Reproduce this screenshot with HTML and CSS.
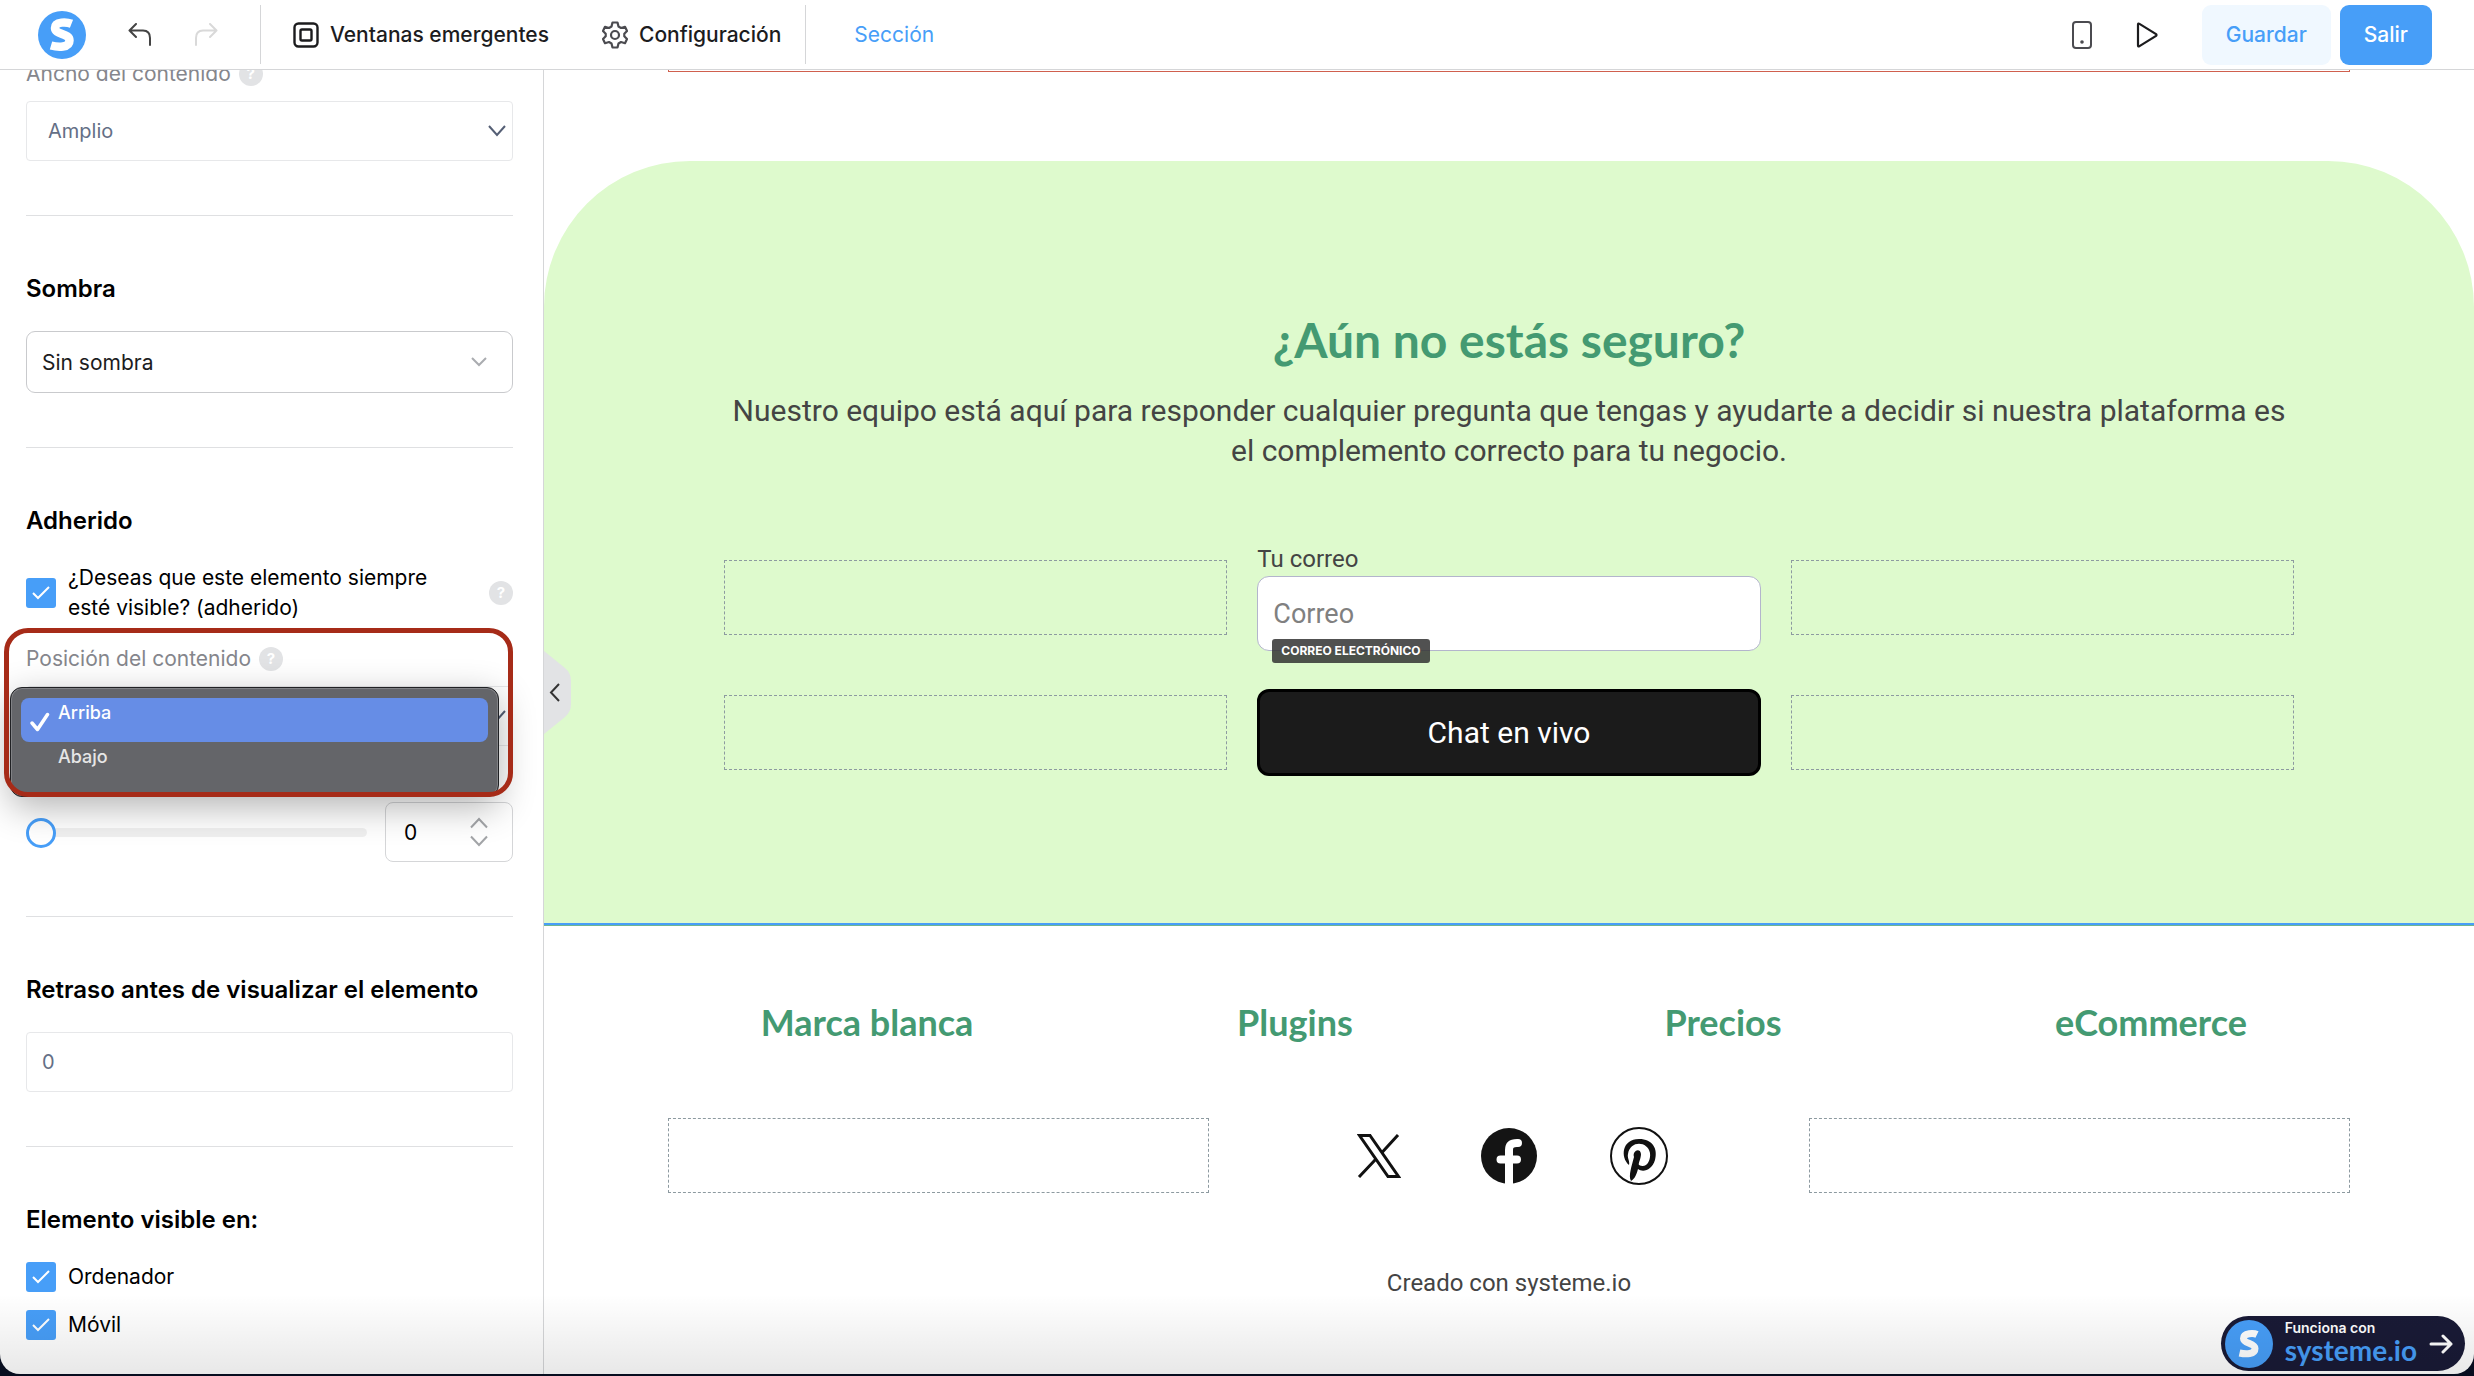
FILE: index.html
```
<!DOCTYPE html>
<html lang="es">

<head>
    <meta charset="UTF-8">
    <meta name="viewport" content="width=device-width, initial-scale=1.0">
    <title>Editor - Sección</title>
    <link rel="stylesheet" href="styles.css">
</head>

<body>
    <div class="app">
        <header class="topbar">
            <a class="logo" href="#" aria-label="Inicio">
                <svg width="48" height="48" viewBox="0 0 48 48">
                    <circle cx="24" cy="24" r="24" fill="#479ef8" />
                    <path d="M33.500 12.800C29 11 17 10 17 17C17 24 31.500 22 31.500 29.500C31.500 37 20 36.500 13 34.500" fill="none" stroke="#fff" stroke-width="8.500" />
                </svg>
            </a>
            <div class="history">
                <button class="icon-btn" type="button" aria-label="Deshacer">
                    <svg width="24" height="24" viewBox="0 0 24 24" fill="none" stroke="#444" stroke-width="2" stroke-linecap="round" stroke-linejoin="round"><path d="M8 1L1.500 7.500L8 14M1.500 7.500H15Q22 7.500 22 15V22" /></svg>
                </button>
                <button class="icon-btn" type="button" aria-label="Rehacer">
                    <svg width="24" height="24" viewBox="0 0 24 24" fill="none" stroke="#d9d9d9" stroke-width="2" stroke-linecap="round" stroke-linejoin="round"><path d="M16 1L22.500 7.500L16 14M22.500 7.500H9Q2 7.500 2 15V22" /></svg>
                </button>
            </div>
            <nav class="menu">
                <a href="#">
                    <svg width="26" height="26" viewBox="0 0 26 26" fill="none" stroke="#1c1c1e" stroke-width="2.400"><rect x="1.500" y="1.500" width="23" height="23" rx="4" /><rect x="7.500" y="7.500" width="11" height="11" rx="1.500" /></svg>
                    Ventanas emergentes
                </a>
                <a href="#">
                    <svg width="26" height="28" viewBox="0 0 26 28" fill="none" stroke="#4b4b50" stroke-width="2.200" stroke-linejoin="round"><path d="M10.500 1.500H15.500L16.500 5.500L19 7L23 5.800L25 10L22.300 12.800V15.200L25 18L23 22.200L19 21L16.500 22.500L15.500 26.500H10.500L9.500 22.500L7 21L3 22.200L1 18L3.700 15.200V12.800L1 10L3 5.800L7 7L9.500 5.500Z" /><circle cx="13" cy="14" r="4" /></svg>
                    Configuración
                </a>
            </nav>
            <a class="crumb" href="#">Sección</a>
            <div class="actions">
                <button class="icon-btn" type="button" aria-label="Vista móvil">
                    <svg width="20" height="28" viewBox="0 0 20 28"><rect x="1" y="1" width="18" height="26" rx="3" fill="none" stroke="#4b4b50" stroke-width="2" /><circle cx="10" cy="21" r="1.800" fill="#4b4b50" /></svg>
                </button>
                <button class="icon-btn" type="button" aria-label="Vista previa">
                    <svg width="22" height="26" viewBox="0 0 22 26"><path d="M2 2.500Q2 1 3.500 1.900L20 12Q21 13 20 14L3.500 24.100Q2 25 2 23.500Z" fill="none" stroke="#1c1c1e" stroke-width="2.200" /></svg>
                </button>
                <div class="buttons">
                    <button class="btn btn-light" type="button">Guardar</button>
                    <button class="btn btn-primary" type="button">Salir</button>
                </div>
            </div>
        </header>

        <div class="workspace">
            <aside class="sidebar">
                <section class="group group-scrolled">
                    <label class="caption" for="width">Ancho del contenido <span class="help">?</span></label>
                    <select class="select select-soft" id="width">
                        <option>Amplio</option>
                    </select>
                </section>

                <section class="group">
                    <h2><label for="shadow">Sombra</label></h2>
                    <select class="select" id="shadow">
                        <option>Sin sombra</option>
                    </select>
                </section>

                <section class="group">
                    <h2>Adherido</h2>
                    <div class="check-row">
                        <label class="check">
                            <input type="checkbox" checked>
                            <span>¿Deseas que este elemento siempre esté visible? (adherido)</span>
                        </label>
                        <span class="help">?</span>
                    </div>
                    <div class="position">
                        <label class="caption" for="position">Posición del contenido <span class="help">?</span></label>
                        <select class="select select-soft" id="position">
                            <option>Arriba</option>
                            <option>Abajo</option>
                        </select>
                        <ul class="dropdown" role="listbox" aria-label="Posición del contenido">
                            <li class="selected" role="option" aria-selected="true">
                                <svg width="20" height="20" viewBox="0 0 20 20" fill="none" stroke="#fff" stroke-width="3.500" stroke-linecap="round" stroke-linejoin="round"><path d="M2 11L7.500 17.500L17.500 2.500" /></svg>
                                <span>Arriba</span>
                            </li>
                            <li role="option" aria-selected="false"><span>Abajo</span></li>
                        </ul>
                        <div class="highlight"></div>
                    </div>
                    <div class="slider-row">
                        <input class="slider" type="range" min="0" max="100" value="0" aria-label="Margen">
                        <div class="stepper">
                            <input type="text" value="0" aria-label="Valor del margen">
                            <svg width="18" height="30" viewBox="0 0 18 30" fill="none" stroke="#a3a5a8" stroke-width="2"><path d="M1 10.500L9 2L17 10.500M1 19.500L9 28L17 19.500" /></svg>
                        </div>
                    </div>
                </section>

                <section class="group">
                    <h2><label for="delay">Retraso antes de visualizar el elemento</label></h2>
                    <input class="text-input" id="delay" type="text" value="0">
                </section>

                <section class="group">
                    <h2>Elemento visible en:</h2>
                    <div class="check-list">
                        <label class="check"><input type="checkbox" checked><span>Ordenador</span></label>
                        <label class="check"><input type="checkbox" checked><span>Móvil</span></label>
                    </div>
                </section>
            </aside>

            <main class="canvas">
                <button class="collapse" type="button" aria-label="Ocultar panel">
                    <svg width="27" height="83" viewBox="0 0 27 83"><path d="M0 0L21 17Q27 22 27 30V53Q27 61 21 66L0 83Z" fill="#e2e3e5" /><path d="M15 33L7 41.500L15 50" fill="none" stroke="#333" stroke-width="2" /></svg>
                </button>

                <div class="block-end"></div>

                <section class="cta">
                    <h1>¿Aún no estás seguro?</h1>
                    <p>Nuestro equipo está aquí para responder cualquier pregunta que tengas y ayudarte a decidir si nuestra plataforma es el complemento correcto para tu negocio.</p>
                    <div class="cta-grid">
                        <div class="slot"></div>
                        <div class="email">
                            <label for="email">Tu correo</label>
                            <input id="email" type="email" placeholder="Correo">
                            <span class="tag">CORREO ELECTRÓNICO</span>
                        </div>
                        <div class="slot"></div>
                        <div class="slot"></div>
                        <button class="chat" type="button">Chat en vivo</button>
                        <div class="slot"></div>
                    </div>
                </section>

                <footer class="footer">
                    <nav class="footer-links">
                        <a href="#">Marca blanca</a>
                        <a href="#">Plugins</a>
                        <a href="#">Precios</a>
                        <a href="#">eCommerce</a>
                    </nav>
                    <div class="footer-grid">
                        <div class="slot"></div>
                        <div class="social">
                            <a href="#" aria-label="X">
                                <svg width="44" height="44" viewBox="0 0 44 44" fill="none" stroke="#111"><path d="M2.500 1.500H13L41.500 42.500H31Z" stroke-width="3" /><path d="M41 1L25 18.500M18.500 25.500L2 43" stroke-width="3" /></svg>
                            </a>
                            <a href="#" aria-label="Facebook">
                                <svg width="56" height="56" viewBox="0 0 56 56"><circle cx="28" cy="28" r="28" fill="#141414" /><path d="M28 58V22Q28 15 36 15H37M19.500 31.500H36" fill="none" stroke="#fff" stroke-width="8" stroke-linecap="round" /></svg>
                            </a>
                            <a href="#" aria-label="Pinterest">
                                <svg width="58" height="58" viewBox="0 0 58 58"><circle cx="29" cy="29" r="28" fill="none" stroke="#111" stroke-width="2" /><path d="M19 38C10 30 12 12 29 12C43 12 48 22 45 33C42 43 33 46 28 42C27 46 25 52 21 54C18 49 22 38 24 30C22 24 30 20 31 27C31 32 28 36 29 38C36 42 41 34 40 26C38 14 20 13 18 27C17 31 20 34 19 38Z" fill="#111" /></svg>
                            </a>
                        </div>
                        <div class="slot"></div>
                    </div>
                    <p class="credit">Creado con systeme.io</p>
                </footer>
            </main>
        </div>

        <a class="powered" href="#">
            <svg width="48" height="48" viewBox="0 0 48 48">
                <circle cx="24" cy="24" r="24" fill="#479ef8" />
                <path d="M32 14.500C29 13 18.500 12.500 18.500 18.500C18.500 24 30 22.500 30 28.500C30 34.500 21 34.500 14.500 33" fill="none" stroke="#fff" stroke-width="7" />
            </svg>
            <span class="powered-text">
                <small>Funciona con</small>
                <strong>systeme.io</strong>
            </span>
            <svg width="24" height="20" viewBox="0 0 24 20" fill="none" stroke="#fff" stroke-width="3" stroke-linecap="round" stroke-linejoin="round"><path d="M2 10H22M14 2L22 10L14 18" /></svg>
        </a>
    </div>
</body>

</html>
```
FILE: styles.css
```
* {
    box-sizing: border-box;
}

body {
    margin: 0;
    background-color: #070d1f;
    font-family: "Inter", "Liberation Sans", sans-serif;
    font-size: 21px;
    color: #1c1c1e;
}

h1, h2, p, ul {
    margin: 0;
    padding: 0;
}

a {
    color: inherit;
    text-decoration: none;
}

button, input, select {
    font-family: inherit;
    font-size: inherit;
}

.app {
    position: relative;
    display: flex;
    flex-direction: column;
    height: calc(100vh - 2px);
    overflow: hidden;
    background-color: white;
    border-radius: 0 0 20px 20px;
}

/* fade at the bottom edge of the window */
.app::after {
    content: "";
    position: absolute;
    left: 0;
    right: 0;
    bottom: 0;
    height: 80px;
    background: linear-gradient(rgba(0, 0, 0, 0), rgba(0, 0, 0, 0.09));
    pointer-events: none;
}

/* top bar */
.topbar {
    position: relative;
    z-index: 2;
    display: flex;
    flex-shrink: 0;
    align-items: center;
    height: 70px;
    padding: 0 42px 0 38px;
    background-color: white;
    border-bottom: 1px solid #d5d6d8;
    font-weight: 500;
}

.logo svg,
.icon-btn svg {
    display: block;
}

.icon-btn {
    padding: 0;
    background: none;
    border: none;
    cursor: pointer;
}

.history {
    display: flex;
    gap: 42px;
    padding: 0 42px;
}

.menu {
    display: flex;
    align-items: center;
    gap: 53px;
    height: 59px;
    padding: 0 24px 0 32px;
    border-left: 1px solid #d5d6d8;
    border-right: 1px solid #d5d6d8;
}

.menu a {
    display: flex;
    align-items: center;
    gap: 11px;
}

.crumb {
    padding-left: 48px;
    color: #479ef8;
    font-weight: 400;
}

.actions {
    display: flex;
    align-items: center;
    gap: 44px;
    margin-left: auto;
}

.buttons {
    display: flex;
    gap: 9px;
}

.btn {
    height: 60px;
    padding: 0 24px;
    border: none;
    border-radius: 9px;
    font-weight: 500;
    cursor: pointer;
}

.btn-light {
    background-color: #f0f8ff;
    color: #479ef8;
}

.btn-primary {
    background-color: #479ef8;
    color: white;
}

.workspace {
    display: flex;
    flex: 1;
    min-height: 0;
}

/* settings panel */
.sidebar {
    flex: 0 0 544px;
    padding: 0 30px 0 26px;
    border-right: 1px solid #d5d6d8;
    overflow: hidden;
    line-height: 30px;
}

.group {
    padding: 58px 0 54px;
    border-bottom: 1px solid #dfe0e2;
}

.group:last-child {
    border-bottom: none;
}

.group-scrolled {
    margin-top: -11px;
    padding-top: 0;
}

.group h2 {
    margin-bottom: 27px;
    font-size: 24px;
    font-weight: 600;
    line-height: 30px;
    color: black;
}

.caption {
    display: flex;
    align-items: center;
    gap: 8px;
    margin-bottom: 12px;
    color: #85868c;
}

.help {
    flex: none;
    width: 24px;
    height: 24px;
    border-radius: 50%;
    background-color: #e2e3e5;
    color: white;
    font-size: 15px;
    font-weight: 700;
    line-height: 24px;
    text-align: center;
}

.select {
    display: block;
    width: 100%;
    height: 62px;
    padding: 0 15px;
    appearance: none;
    background: white url("data:image/svg+xml,%3Csvg xmlns='http://www.w3.org/2000/svg' width='16' height='10' fill='none' stroke='%23aaacb0' stroke-width='2'%3E%3Cpath d='M1 1l7 7 7-7'/%3E%3C/svg%3E") no-repeat right 25px center;
    border: 1px solid #c9cacd;
    border-radius: 9px;
    color: #1c1c1e;
}

.select-soft {
    height: 60px;
    padding: 0 21px;
    background-image: url("data:image/svg+xml,%3Csvg xmlns='http://www.w3.org/2000/svg' width='18' height='12' fill='none' stroke='%23555f75' stroke-width='2'%3E%3Cpath d='M1 1l8 9 8-9'/%3E%3C/svg%3E");
    background-position: right 6px center;
    border-color: #e7e8ea;
    border-radius: 4px;
    color: #646f86;
    font-size: 20px;
}

.check-row {
    display: flex;
    align-items: center;
    justify-content: space-between;
    margin-bottom: 21px;
}

.check {
    display: flex;
    align-items: center;
    gap: 12px;
    max-width: 420px;
    color: black;
}

.check input {
    flex: none;
    width: 30px;
    height: 30px;
    margin: 0;
    appearance: none;
    border-radius: 3px;
    background: #479ef8 url("data:image/svg+xml,%3Csvg xmlns='http://www.w3.org/2000/svg' width='18' height='14' fill='none' stroke='white' stroke-width='2'%3E%3Cpath d='M1 7l5 5L17 1'/%3E%3C/svg%3E") no-repeat center;
}

.check-list {
    display: flex;
    flex-direction: column;
    gap: 18px;
}

.position {
    position: relative;
    margin-bottom: 56px;
}

.dropdown {
    position: absolute;
    top: 43px;
    left: -16px;
    right: 14px;
    height: 110px;
    padding: 10px;
    list-style: none;
    background-color: #646569;
    border: 1px solid #202124;
    border-radius: 12px;
    box-shadow: inset 0 0 0 1px #808185, 0 10px 36px rgba(0, 0, 0, 0.3);
    color: #e6e6e6;
    font-size: 18px;
    font-weight: 500;
}

.dropdown li {
    display: flex;
    gap: 8px;
    height: 44px;
    padding: 0 9px;
    border-radius: 8px;
}

.dropdown li:not(.selected) {
    padding-left: 37px;
}

.dropdown svg {
    align-self: center;
    margin-top: 4px;
}

.dropdown .selected {
    background-color: #668de6;
    color: white;
}

/* red marker around the field */
.highlight {
    position: absolute;
    top: -16px;
    left: -22px;
    right: 0;
    height: 169px;
    border: 5px solid #a62b18;
    border-radius: 24px;
    pointer-events: none;
}

.slider-row {
    display: flex;
    align-items: center;
    gap: 18px;
}

.slider {
    flex: 1;
    min-width: 0;
    height: 30px;
    margin: 0;
    appearance: none;
    background: none;
}

.slider::-webkit-slider-runnable-track {
    height: 9px;
    border-radius: 5px;
    background-color: rgba(0, 0, 0, 0.06);
}

.slider::-webkit-slider-thumb {
    width: 30px;
    height: 30px;
    margin-top: -10px;
    appearance: none;
    background-color: white;
    border: 3px solid #479ef8;
    border-radius: 50%;
}

.stepper {
    display: flex;
    align-items: center;
    justify-content: space-between;
    width: 128px;
    height: 60px;
    padding: 0 24px 0 18px;
    border: 1px solid #d5d6d8;
    border-radius: 8px;
}

.stepper input {
    width: 50px;
    padding: 0;
    background: none;
    border: none;
    color: black;
}

.text-input {
    display: block;
    width: 100%;
    height: 60px;
    padding: 0 15px;
    border: 1px solid #e7e8ea;
    border-radius: 4px;
    color: #646f86;
    font-size: 20px;
}

/* page canvas */
.canvas {
    position: relative;
    flex: 1;
    min-width: 0;
    overflow: hidden;
    font-family: "Roboto", sans-serif;
    color: #444;
}

.collapse {
    position: absolute;
    top: 581px;
    left: 0;
    padding: 0;
    background: none;
    border: none;
    cursor: pointer;
}

.collapse svg {
    display: block;
}

.block-end {
    height: 2px;
    margin: 0 124px 89px;
    border: 1px solid #d0604e;
    border-top: none;
}

.cta {
    padding: 150px 180px 147px;
    background-color: #defacd;
    border-bottom: 2px solid #479ef8;
    border-radius: 146px 146px 0 0;
    text-align: center;
}

.cta h1 {
    margin-bottom: 22px;
    font-family: "Lato", sans-serif;
    font-size: 48px;
    line-height: 58px;
    color: #449a72;
}

.cta p {
    margin-bottom: 73px;
    font-size: 30px;
    line-height: 40px;
}

.cta-grid {
    display: grid;
    grid-template-columns: repeat(3, 1fr);
    align-items: center;
    gap: 38px 30px;
}

.slot {
    height: 75px;
    border: 1px dashed #8d9aa0;
}

.email {
    position: relative;
    text-align: left;
    font-size: 24px;
    line-height: 30px;
}

.email label {
    display: block;
    margin-bottom: 2px;
}

.email input {
    display: block;
    width: 100%;
    height: 75px;
    padding: 0 15px;
    background-color: white;
    border: 1px solid #b3b5cc;
    border-radius: 12px;
    font-size: 27px;
}

.email input::placeholder {
    color: #808080;
}

.tag {
    position: absolute;
    left: 15px;
    bottom: -12px;
    padding: 0 9px;
    background-color: rgba(50, 50, 50, 0.85);
    border-radius: 3px;
    color: white;
    font-family: "Inter", sans-serif;
    font-size: 12px;
    font-weight: 700;
    line-height: 24px;
}

.chat {
    height: 87px;
    background-color: #1b1b1b;
    border: 3px solid black;
    border-radius: 12px;
    color: white;
    font-size: 30px;
    cursor: pointer;
}

.footer {
    padding: 74px 124px;
    border-top: 1px solid #6fb592;
    text-align: center;
}

.footer-links {
    display: grid;
    grid-template-columns: repeat(4, 1fr);
    gap: 30px;
    margin-bottom: 74px;
    font-family: "Lato", sans-serif;
    font-size: 36px;
    font-weight: 700;
    line-height: 44px;
    color: #449a72;
}

.footer-grid {
    display: grid;
    grid-template-columns: repeat(3, 1fr);
    gap: 30px;
    margin-bottom: 75px;
}

.social {
    display: flex;
    align-items: center;
    justify-content: center;
    gap: 72px;
}

.social a {
    display: flex;
    justify-content: center;
    width: 58px;
}

.credit {
    font-size: 24px;
    line-height: 30px;
}

/* floating badge */
.powered {
    position: absolute;
    right: 9px;
    bottom: 3px;
    display: flex;
    align-items: center;
    gap: 12px;
    height: 55px;
    padding: 0 12px 0 4px;
    background-color: #191a36;
    border-radius: 28px;
    color: white;
}

.powered-text {
    display: flex;
    flex-direction: column;
    padding-bottom: 4px;
}

.powered small {
    font-size: 14px;
    font-weight: 600;
    line-height: 16px;
}

.powered strong {
    color: #479ef8;
    font-family: "Lato", sans-serif;
    font-size: 28px;
    line-height: 28px;
}
```
